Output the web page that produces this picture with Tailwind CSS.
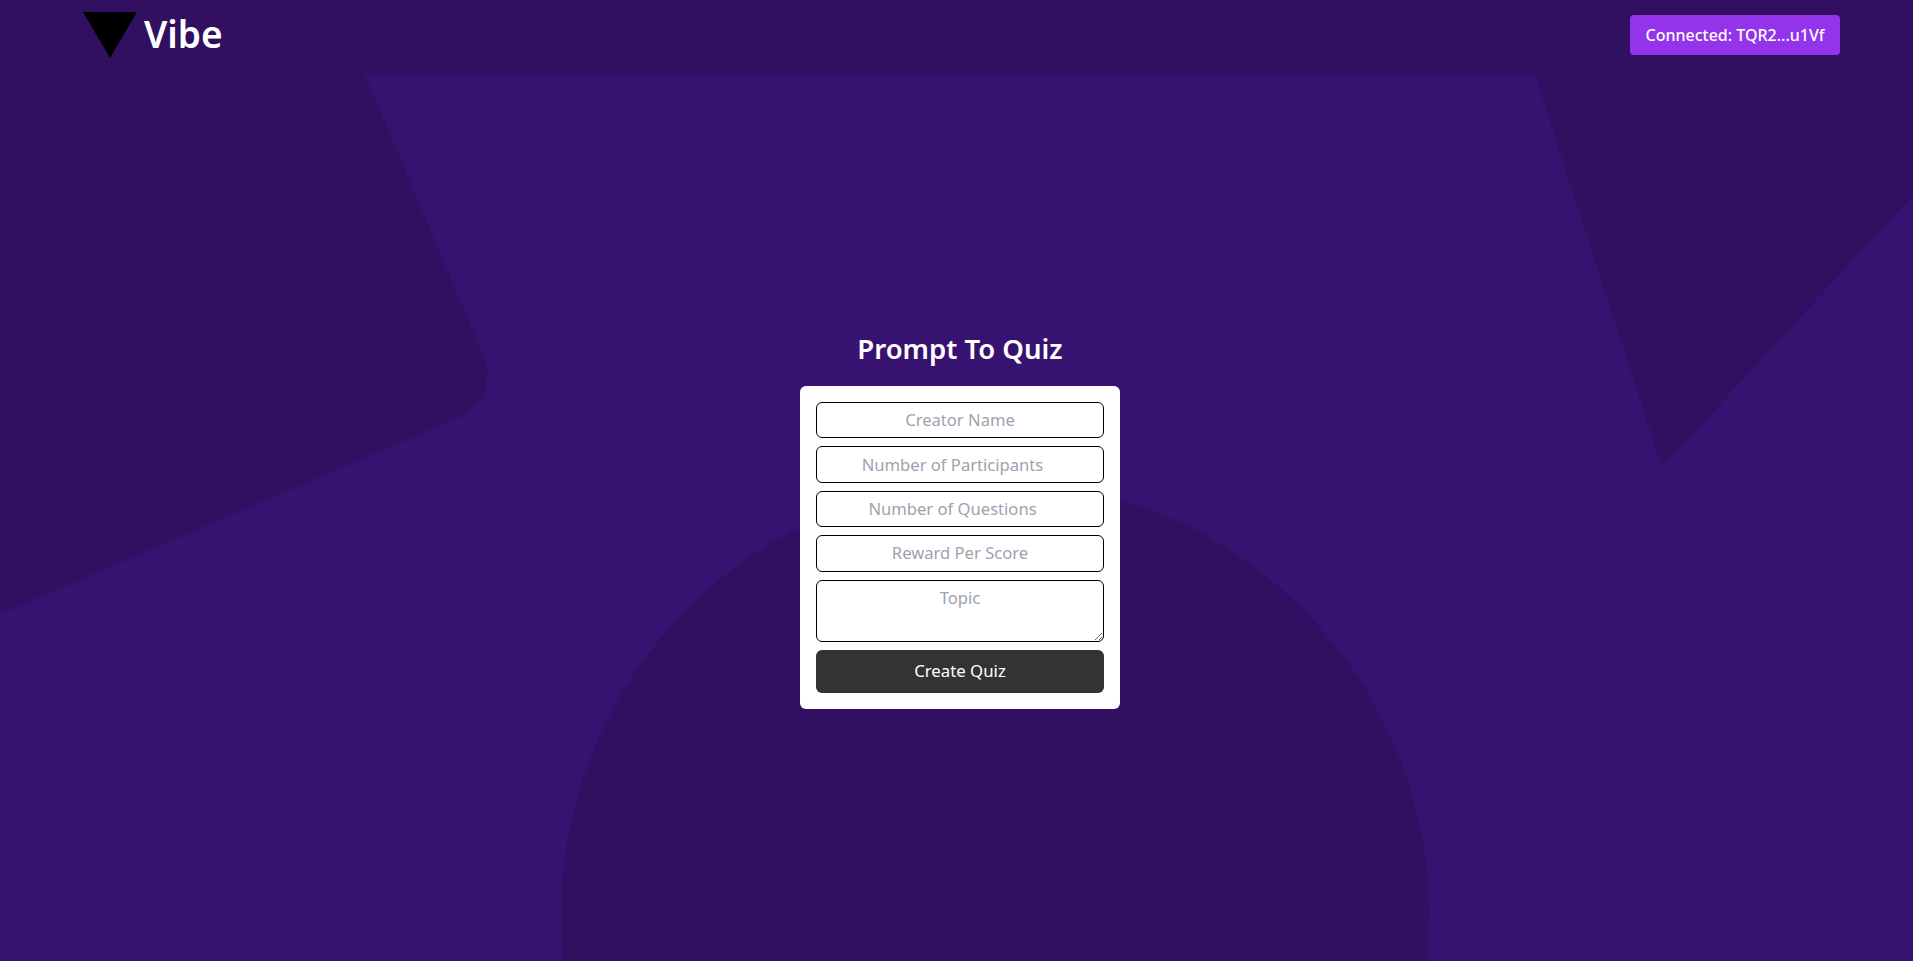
<!DOCTYPE html>
<html lang="en">
<head>
    <meta charset="UTF-8">
    <meta name="viewport" content="width=device-width, initial-scale=1.0">
    <title>Vibe - Prompt To Quiz</title>
    <script src="https://cdn.jsdelivr.net/npm/@tailwindcss/browser@4"></script>
</head>
<body class="relative h-screen overflow-hidden bg-[#371271] font-['Noto_Sans',sans-serif] text-white">
    <!-- Background shapes -->
    <svg class="absolute inset-0 w-full h-full" viewBox="0 0 1913 961" fill="#311062">
        <path d="M0 0H365V75L483.5 356A47 47 0 0 1 458.3 417.7L0 614Z"/>
        <path d="M1535 75L1662 467L1913 195V0H1535Z"/>
        <circle cx="995" cy="915" r="434"/>
    </svg>

    <!-- Header -->
    <header class="relative h-[75px] bg-[#311062] flex items-start justify-between pl-[83px] pr-[73px]">
        <a href="#" class="flex items-center gap-[7px] mt-3">
            <svg class="w-[54px] h-[46px]" viewBox="0 0 54 46"><path d="M0 0H54L27 46Z" fill="#000"/></svg>
            <span class="text-[37px] leading-[46px] font-semibold -mt-[2px]">Vibe</span>
        </a>
        <button class="mt-[15px] h-10 w-[210px] rounded bg-[#9333ea] font-medium">Connected: TQR2...u1Vf</button>
    </header>

    <!-- Quiz form -->
    <main class="relative flex flex-col items-center pl-[7px] pt-[253px]">
        <h1 class="h-[58px] text-[27.5px] leading-[42px] font-semibold">Prompt To Quiz</h1>
        <form class="w-[320px] rounded-md bg-white p-4 flex flex-col gap-2">
            <input type="text" placeholder="Creator Name" class="h-[36.4px] px-2 pb-px rounded-md border border-black text-center text-[16.6px] text-black placeholder:text-[#9ca3af]">
            <input type="number" placeholder="Number of Participants" class="h-[36.4px] px-2 rounded-md border border-black text-center text-[16.6px] text-black placeholder:text-[#9ca3af]">
            <input type="number" placeholder="Number of Questions" class="h-[36.4px] px-2 rounded-md border border-black text-center text-[16.6px] text-black placeholder:text-[#9ca3af]">
            <input type="text" placeholder="Reward Per Score" class="h-[36.4px] px-2 pb-px rounded-md border border-black text-center text-[16.6px] text-black placeholder:text-[#9ca3af]">
            <textarea placeholder="Topic" class="block h-[62px] px-2 py-[5px] rounded-md border border-black text-center text-[16.6px] text-black placeholder:text-[#9ca3af]"></textarea>
            <button type="button" class="h-[43px] rounded-md bg-[#333333] text-[16.8px] text-white">Create Quiz</button>
        </form>
    </main>
</body>
</html>
